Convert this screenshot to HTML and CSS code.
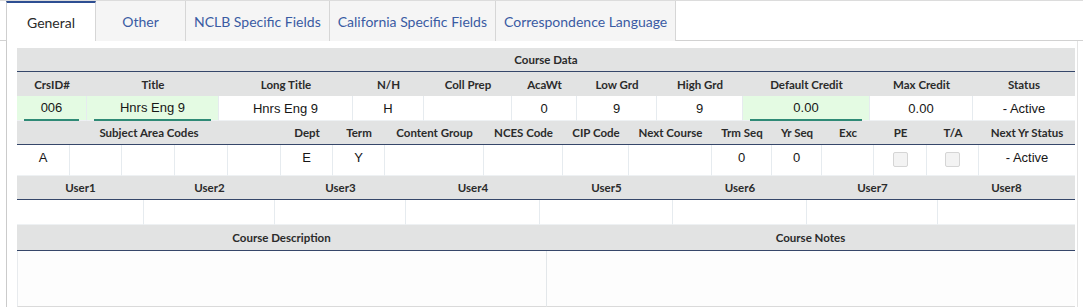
FILE: index.html
```html
<!DOCTYPE html>
<html lang="en">
<head>
    <meta charset="UTF-8">
    <meta name="viewport" content="width=device-width, initial-scale=1.0">
    <title>Course</title>
    <link rel="stylesheet" href="styles.css">
</head>
<body>
    <div class="tabs">
        <div class="tab tab_active">General</div>
        <div class="tab">Other</div>
        <div class="tab">NCLB Specific Fields</div>
        <div class="tab">California Specific Fields</div>
        <div class="tab">Correspondence Language</div>
    </div>
    <div class="panel">
        <!-- course data -->
        <div class="block block_one">
            <div class="head head_title line">Course Data</div>
            <div class="head">CrsID#</div>
            <div class="head">Title</div>
            <div class="head">Long Title</div>
            <div class="head">N/H</div>
            <div class="head">Coll Prep</div>
            <div class="head">AcaWt</div>
            <div class="head">Low Grd</div>
            <div class="head">High Grd</div>
            <div class="head">Default Credit</div>
            <div class="head">Max Credit</div>
            <div class="head">Status</div>
            <div class="cell cell_edit"><span class="input">006</span></div>
            <div class="cell cell_edit"><span class="input">Hnrs Eng 9</span></div>
            <div class="cell">Hnrs Eng 9</div>
            <div class="cell">H</div>
            <div class="cell"></div>
            <div class="cell">0</div>
            <div class="cell">9</div>
            <div class="cell">9</div>
            <div class="cell cell_edit"><span class="input">0.00</span></div>
            <div class="cell">0.00</div>
            <div class="cell cell_last">- Active</div>
        </div>
        <!-- codes -->
        <div class="block block_two">
            <div class="head line span5">Subject Area Codes</div>
            <div class="head line">Dept</div>
            <div class="head line">Term</div>
            <div class="head line">Content Group</div>
            <div class="head line">NCES Code</div>
            <div class="head line">CIP Code</div>
            <div class="head line">Next Course</div>
            <div class="head line">Trm Seq</div>
            <div class="head line">Yr Seq</div>
            <div class="head line">Exc</div>
            <div class="head line">PE</div>
            <div class="head line">T/A</div>
            <div class="head line">Next Yr Status</div>
            <div class="cell cell_tall">A</div>
            <div class="cell cell_tall"></div>
            <div class="cell cell_tall"></div>
            <div class="cell cell_tall"></div>
            <div class="cell cell_tall"></div>
            <div class="cell cell_tall">E</div>
            <div class="cell cell_tall">Y</div>
            <div class="cell cell_tall"></div>
            <div class="cell cell_tall"></div>
            <div class="cell cell_tall"></div>
            <div class="cell cell_tall"></div>
            <div class="cell cell_tall">0</div>
            <div class="cell cell_tall">0</div>
            <div class="cell cell_tall"></div>
            <div class="cell cell_tall"><input type="checkbox" class="check" disabled></div>
            <div class="cell cell_tall"><input type="checkbox" class="check" disabled></div>
            <div class="cell cell_tall cell_last">- Active</div>
        </div>
        <!-- user fields -->
        <div class="block block_three">
            <div class="head line">User1</div>
            <div class="head line">User2</div>
            <div class="head line">User3</div>
            <div class="head line">User4</div>
            <div class="head line">User5</div>
            <div class="head line">User6</div>
            <div class="head line">User7</div>
            <div class="head line">User8</div>
            <div class="cell"></div>
            <div class="cell"></div>
            <div class="cell"></div>
            <div class="cell"></div>
            <div class="cell"></div>
            <div class="cell"></div>
            <div class="cell"></div>
            <div class="cell cell_last"></div>
        </div>
        <!-- description -->
        <div class="block block_four">
            <div class="head line head_desc">Course Description</div>
            <div class="head line head_desc">Course Notes</div>
            <div class="memo"></div>
            <div class="memo cell_last"></div>
        </div>
    </div>
</body>
</html>
```

FILE: styles.css
```css
*{
  box-sizing: border-box;
}
body{
  margin: 0;
  border-top: 1px solid #dcdcdc;
  background-color: #fff;
  font-family: "Lato", "Liberation Sans", sans-serif;
}
.tabs{
  display: flex;
  padding-left: 6px;
  border-bottom: 1px solid #d2d2d2;
  height: 40px;
}
.tab{
  min-width: 90px;
  padding: 0 8px;
  height: 40px;
  display: flex;
  align-items: center;
  justify-content: center;
  background-color: #f5f5f5;
  border-right: 1px solid #d6d6d6;
  color: #3a5ba3;
  font-size: 14px;
}
.tab_active{
  background-color: #fff;
  color: #2a2a2a;
  border-top: 2px solid #2d4e92;
  border-left: 1px solid #cfcfcf;
  height: 40px;
  margin-bottom: -1px;
  padding-top: 1px;
}
.panel{
  margin: 0 5px 0 6px;
  border-left: 1px solid #cbcbcb;
  border-right: 1px solid #e4e4e4;
  padding: 7px 2px 0 10px;
}
.block{
  display: grid;
  width: 1058px;
}
.block_one{
  grid-template-columns: 70px 132px 134px 71px 88px 65px 80px 86px 127px 103px 102px;
}
.block_two{
  grid-template-columns: 53px 52px 53px 53px 53px 52px 52px 99px 79px 66px 83px 60px 50px 52px 53px 52px 96px;
}
.block_three{
  grid-template-columns: 127px 131px 131px 134px 133px 134px 131px 137px;
}
.block_four{
  grid-template-columns: 529px 529px;
}
.head{
  background-color: #e2e3e3;
  color: #2b2b2b;
  font-size: 11.5px;
  font-weight: 700;
  height: 24px;
  display: flex;
  align-items: center;
  justify-content: center;
  white-space: nowrap;
}
.head_title{
  grid-column: 1 / -1;
}
.line{
  border-bottom: 1px solid #36476a;
}
.span5{
  grid-column: span 5;
}
.head_desc{
  height: 26px;
}
.cell{
  height: 25px;
  display: flex;
  align-items: center;
  justify-content: center;
  border-right: 1px solid #e6ebef;
  border-bottom: 1px solid #eef1f3;
  color: #161616;
  font-family: "Liberation Sans", Arial, sans-serif;
  font-size: 13px;
  background-color: #fff;
}
.cell_last{
  border-right: none;
}
.cell_edit{
  background-color: #e4fbe3;
  padding: 0 7px;
}
.input{
  width: 100%;
  height: 25px;
  display: flex;
  align-items: center;
  justify-content: center;
  border-bottom: 2px solid #2f8a76;
  padding-top: 1px;
}
.cell_tall{
  height: 31px;
  align-items: flex-start;
  padding-top: 5px;
}
.check{
  appearance: none;
  margin: 2px 0 0 0;
  width: 15px;
  height: 15px;
  background-color: #f3f3f3;
  border: 1px solid #d5d5d5;
  border-radius: 2px;
}
.memo{
  height: 56px;
  background-color: #fdfdfd;
  border-left: 1px solid #e8ebee;
  border-bottom: 1px solid #dadada;
}
.memo.cell_last{
  border-left: 1px solid #e3e7ea;
}
```
